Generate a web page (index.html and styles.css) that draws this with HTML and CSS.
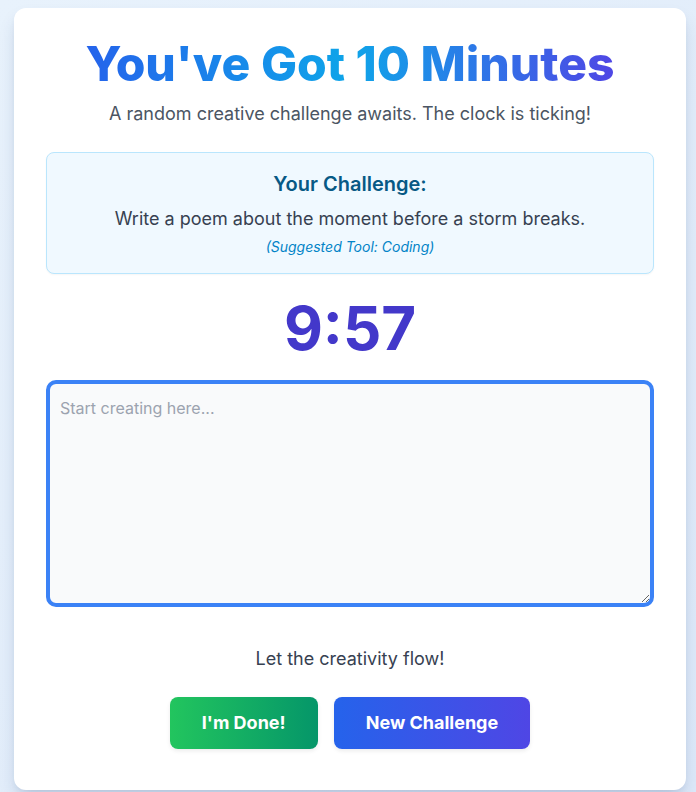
FILE: index.html
```html
<!DOCTYPE html>
<html lang="en">
<head>
<meta charset="utf-8">
<title>You've Got 10 Minutes</title>
<link rel="stylesheet" href="styles.css">
</head>
<body>
<main class="card">
  <h1 class="title">You've Got 10 Minutes</h1>
  <p class="subtitle">A random creative challenge awaits. The clock is ticking!</p>
  <section class="challenge">
    <h2 class="challenge-head">Your Challenge:</h2>
    <p class="challenge-text">Write a poem about the moment before a storm breaks.</p>
    <p class="challenge-tool">(Suggested Tool: Coding)</p>
  </section>
  <div class="timer">9:57</div>
  <textarea class="editor" placeholder="Start creating here..." autofocus></textarea>
  <p class="status">Let the creativity flow!</p>
  <div class="actions">
    <button class="btn btn-done">I'm Done!</button>
    <button class="btn btn-new">New Challenge</button>
  </div>
</main>
</body>
</html>
```

FILE: styles.css
```css
* { box-sizing: border-box; }
html, body { height: 100%; }
body {
  margin: 0;
  font-family: Inter, "Noto Sans", sans-serif;
  background: linear-gradient(135deg, #e8f2fc 0%, #dde9f9 100%);
  overflow: hidden;
}
.card {
  width: 672px;
  margin: 8px 0 0 14px;
  background: #fff;
  border-radius: 12px;
  box-shadow: 0 10px 18px -3px rgba(30, 58, 110, 0.18), 0 4px 8px -4px rgba(30, 58, 110, 0.12);
  padding: 32px 32px 41px;
  display: flex;
  flex-direction: column;
  align-items: center;
}
.title {
  margin: 0;
  font-size: 48px;
  line-height: 48px;
  font-weight: 800;
  letter-spacing: 0;
  background: linear-gradient(90deg, #2563eb 0%, #0ea5e9 50%, #4f46e5 100%);
  -webkit-background-clip: text;
  background-clip: text;
  color: transparent;
}
.subtitle {
  margin: 12px 0 0;
  font-size: 18px;
  line-height: 28px;
  color: #4b5563;
}
.challenge {
  align-self: stretch;
  margin-top: 24px;
  background: #f0f9ff;
  border: 1px solid #bae6fd;
  border-radius: 8px;
  padding: 17px 24px 16px;
  text-align: center;
  box-shadow: 0 1px 2px rgba(0,0,0,0.04);
}
.challenge-head {
  margin: 0;
  font-size: 20px;
  line-height: 28px;
  font-weight: 600;
  color: #075985;
}
.challenge-text {
  margin: 7px 0 0;
  font-size: 18px;
  line-height: 28px;
  color: #374151;
}
.challenge-tool {
  margin: 4px 0 0;
  font-size: 14px;
  line-height: 20px;
  font-style: italic;
  color: #0284c7;
}
.timer {
  margin-top: 24px;
  font-size: 60px;
  line-height: 60px;
  font-weight: 700;
  color: #4338ca;
}
.editor {
  align-self: stretch;
  margin-top: 22px;
  height: 227px;
  border: 4px solid #3b82f6;
  border-radius: 10px;
  background: #f9fafb;
  padding: 12px 10px;
  font-family: Inter, "Noto Sans", sans-serif;
  font-size: 16px;
  line-height: 24px;
  color: #111827;
  outline: none;
  resize: vertical;
}
.editor::placeholder { color: #9ca3af; }
.status {
  margin: 38px 0 0;
  font-size: 18px;
  line-height: 28px;
  color: #374151;
}
.actions {
  margin-top: 24px;
  display: flex;
  gap: 16px;
}
.btn {
  border: none;
  border-radius: 8px;
  padding: 13px 32px;
  font-family: Inter, "Noto Sans", sans-serif;
  font-size: 18px;
  line-height: 26px;
  font-weight: 700;
  color: #fff;
  box-shadow: 0 2px 4px rgba(0,0,0,0.08);
}
.btn-done { background: linear-gradient(90deg, #22c55e, #059669); }
.btn-new { background: linear-gradient(90deg, #2563eb, #4f46e5); }
```
